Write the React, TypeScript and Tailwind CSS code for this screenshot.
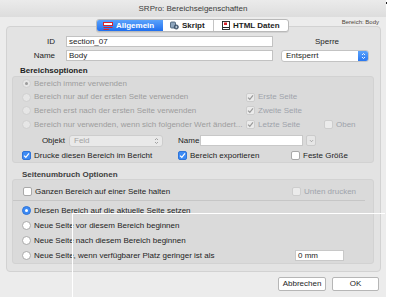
import React from 'react';

// small macOS-like form controls
const Check = ({ on, disabled }: { on?: boolean; disabled?: boolean }) => {
  const box =
    on && !disabled
      ? 'bg-[#3d8bf5] border-[#2f74d8]'
      : disabled
        ? 'bg-[#ebebeb] border-[#cdcdcd]'
        : 'bg-white border-[#a9a9a9]';
  return (
    <span className={`flex h-[9px] w-[9px] shrink-0 items-center justify-center rounded-[2px] border ${box}`}>
      {on && (
        <svg width="7" height="7" viewBox="0 0 7 7">
          <path d="M1 3.6 L2.8 5.3 L6 1.4" fill="none" stroke={disabled ? '#9a9a9a' : '#fff'} strokeWidth="1.2" />
        </svg>
      )}
    </span>
  );
};

const Radio = ({ on, disabled }: { on?: boolean; disabled?: boolean }) => {
  const cls =
    on && !disabled
      ? 'bg-[#3d8bf5] border-[#2f74d8]'
      : disabled
        ? 'bg-[#e6e6e6] border-[#d0d0d0]'
        : 'bg-white border-[#a9a9a9]';
  return (
    <span className={`flex h-[9px] w-[9px] shrink-0 items-center justify-center rounded-full border ${cls}`}>
      {on && <span className={`h-[3px] w-[3px] rounded-full ${disabled ? 'bg-[#9a9a9a]' : 'bg-white'}`} />}
    </span>
  );
};

const Chevrons = ({ color }: { color: string }) => (
  <svg width="5" height="8" viewBox="0 0 5 8">
    <path d="M1 3 L2.5 1.5 L4 3 M1 5 L2.5 6.5 L4 5" fill="none" stroke={color} strokeWidth="0.9" />
  </svg>
);

const RadioLine = ({ label, on, disabled }: { label: string; on?: boolean; disabled?: boolean }) => (
  <span className={`flex items-center gap-[3px] whitespace-nowrap ${disabled ? 'text-[#9d9d9d]' : ''}`}>
    <Radio on={on} disabled={disabled} />
    {label}
  </span>
);

const CheckLine = ({ label, on, disabled }: { label: string; on?: boolean; disabled?: boolean }) => (
  <span className={`flex items-center gap-[3px] whitespace-nowrap ${disabled ? 'text-[#9ea3ab]' : ''}`}>
    <Check on={on} disabled={disabled} />
    {label}
  </span>
);

export default function App() {
  return (
    <div className="relative h-[307px] w-[399px] overflow-hidden bg-white font-['Liberation_Sans',Arial,sans-serif] text-[8px] leading-[10px] text-[#1d1d1d]">
      <div className="flex h-[297px] w-[386px] flex-col bg-[#ececec]">
        {/* title bar */}
        <div className="flex h-[17px] shrink-0 items-center justify-center bg-gradient-to-b from-[#ebebeb] to-[#dddddd] text-[#3c3c3c]">
          SRPro: Bereichseigenschaften
        </div>

        {/* tabs */}
        <div className="relative z-10 mt-[2px] flex h-[13px] shrink-0">
          <div className="ml-[96px] flex h-[13px] overflow-hidden rounded-[3px] border border-[#b9b9b9] bg-white font-bold shadow-[0_1px_0_rgba(0,0,0,0.08)]">
            <div className="flex w-[66px] items-center gap-[3px] bg-gradient-to-b from-[#5aa2fb] to-[#1f6fef] pl-[6px] text-white">
              <svg width="10" height="8" viewBox="0 0 10 8">
                <rect x="0.5" y="0.5" width="9" height="3" fill="#fff" stroke="#d8232a" />
                <path d="M0.5 5.5 H9.5 M0.5 7.5 H6" stroke="#d8232a" strokeWidth="1" />
              </svg>
              Allgemein
            </div>
            <div className="flex w-[51px] items-center gap-[3px] border-r border-[#c4c4c4] pl-[7px]">
              <svg width="9" height="9" viewBox="0 0 9 9">
                <rect x="0.5" y="1" width="5" height="6" rx="1" fill="#8fa6bd" stroke="#3d556d" strokeWidth="0.8" />
                <circle cx="6.3" cy="6" r="2.1" fill="#5d7690" stroke="#2b3d50" strokeWidth="0.7" />
                <circle cx="6.3" cy="6" r="0.7" fill="#fff" />
              </svg>
              Skript
            </div>
            <div className="flex w-[74px] items-center gap-[3px] pl-[8px]">
              <svg width="8" height="9" viewBox="0 0 8 9">
                <rect x="0.5" y="0.5" width="7" height="8" fill="#fff" stroke="#222" strokeWidth="0.9" />
                <rect x="2" y="1.5" width="3" height="2.5" fill="#d8232a" />
                <path d="M1 6.5 H7" stroke="#222" strokeWidth="1.2" />
              </svg>
              HTML Daten
            </div>
          </div>
          <span className="ml-auto mr-[7px] text-[6px] leading-[7px] text-[#4d4438]">Bereich: Body</span>
        </div>

        {/* tab panel */}
        <div className="ml-[6px] mt-[-6px] h-[246px] w-[375px] shrink-0 rounded-[4px] border border-[#d2d2d2] bg-[#e3e3e3]">
          {/* ID / Name / Sperre */}
          <div className="flex pt-[9px]">
            <div className="flex flex-col gap-[3px]">
              <div className="flex h-[11px] items-center">
                <span className="w-[48px] text-right">ID</span>
                <span className="ml-[11px] flex h-[11px] w-[207px] items-center border border-[#c2c2c2] bg-white pl-[2px]">section_07</span>
              </div>
              <div className="flex h-[11px] items-center">
                <span className="w-[48px] text-right">Name</span>
                <span className="ml-[11px] flex h-[11px] w-[207px] items-center border border-[#c2c2c2] bg-white pl-[2px]">Body</span>
              </div>
            </div>
            <div className="ml-[8px] flex w-[88px] flex-col">
              <span className="flex h-[11px] items-center justify-center pl-[4px]">Sperre</span>
              <div className="mt-[3px] flex h-[12px] overflow-hidden rounded-[3px] border border-[#c3c3c3] bg-white">
                <span className="flex flex-1 items-center pl-[4px]">Entsperrt</span>
                <span className="flex w-[10px] items-center justify-center bg-gradient-to-b from-[#5aa2fb] to-[#2a78f0]">
                  <Chevrons color="#fff" />
                </span>
              </div>
            </div>
          </div>

          {/* Bereichsoptionen */}
          <div className="mt-[4px] h-[10px] pl-[13px] font-bold">Bereichsoptionen</div>
          <div className="ml-[5px] flex h-[87px] w-[362px] flex-col rounded-[3px] border border-[#d2d2d2] bg-[#dadada]">
            <div className="flex h-[13px] items-center pl-[9px]">
              <RadioLine label="Bereich immer verwenden" on disabled />
            </div>
            <div className="flex h-[14px] items-center pl-[9px]">
              <div className="w-[224px]">
                <RadioLine label="Bereich nur auf der ersten Seite verwenden" disabled />
              </div>
              <CheckLine label="Erste Seite" on disabled />
            </div>
            <div className="flex h-[13px] items-center pl-[9px]">
              <div className="w-[224px]">
                <RadioLine label="Bereich erst nach der ersten Seite verwenden" disabled />
              </div>
              <CheckLine label="Zweite Seite" on disabled />
            </div>
            <div className="flex h-[15px] items-center pl-[9px]">
              <div className="w-[224px]">
                <RadioLine label="Bereich nur verwenden, wenn sich folgender Wert ändert..." disabled />
              </div>
              <div className="w-[78px]">
                <CheckLine label="Letzte Seite" on disabled />
              </div>
              <CheckLine label="Oben" disabled />
            </div>
            <div className="flex h-[17px] items-center">
              <span className="w-[52px] text-right">Objekt</span>
              <span className="ml-[4px] flex h-[12px] w-[94px] items-center justify-between rounded-[3px] border border-[#cdcdcd] bg-[#e9e9e9] pl-[4px] pr-[3px] text-[#a3a3a3]">
                Feld
                <Chevrons color="#9a9a9a" />
              </span>
              <span className="ml-[15px] w-[21px]">Name</span>
              <span className="ml-[1px] h-[11px] w-[103px] border border-[#c8c8c8] bg-white" />
              <span className="ml-[3px] flex h-[11px] w-[10px] items-center justify-center rounded-[2px] border border-[#cbcbcb] bg-[#e6e6e6]">
                <svg width="5" height="4" viewBox="0 0 5 4">
                  <path d="M1 1.2 L2.5 2.7 L4 1.2" fill="none" stroke="#9a9a9a" strokeWidth="0.9" />
                </svg>
              </span>
            </div>
            <div className="flex h-[13px] items-center pl-[9px]">
              <div className="w-[156px]">
                <CheckLine label="Drucke diesen Bereich im Bericht" on />
              </div>
              <div className="w-[113px]">
                <CheckLine label="Bereich exportieren" on />
              </div>
              <CheckLine label="Feste Größe" />
            </div>
          </div>

          {/* Seitenumbruch Optionen */}
          <div className="mt-[7px] h-[9px] pl-[15px] font-bold leading-[9px] text-[#3e3e3e]">Seitenumbruch Optionen</div>
          <div className="ml-[5px] flex h-[85px] w-[362px] flex-col rounded-[3px] border border-[#d2d2d2] bg-[#dadada]">
            <div className="mr-[8px] flex h-[21px] items-center border-b border-[#c6c6c6] pl-[10px] pt-[3px]">
              <div className="w-[269px]">
                <CheckLine label="Ganzen Bereich auf einer Seite halten" />
              </div>
              <CheckLine label="Unten drucken" disabled />
            </div>
            <div className="flex flex-col pl-[9px] pt-[2px]">
              <div className="flex h-[15px] items-center">
                <RadioLine label="Diesen Bereich auf die aktuelle Seite setzen" on />
              </div>
              <div className="flex h-[15px] items-center">
                <RadioLine label="Neue Seite vor diesem Bereich beginnen" />
              </div>
              <div className="flex h-[15px] items-center">
                <RadioLine label="Neue Seite nach diesem Bereich beginnen" />
              </div>
              <div className="flex h-[15px] items-center">
                <div className="w-[273px]">
                  <RadioLine label="Neue Seite, wenn verfügbarer Platz geringer ist als" />
                </div>
                <span className="flex h-[11px] w-[49px] items-center border border-[#c8c8c8] bg-white pl-[2px]">0 mm</span>
              </div>
            </div>
          </div>
        </div>

        {/* buttons */}
        <div className="mt-[5px] flex justify-end gap-[6px] pr-[7px]">
          <button className="flex h-[14px] w-[48px] items-center justify-center rounded-[2px] border border-[#b6b6b6] bg-white">
            Abbrechen
          </button>
          <button className="flex h-[14px] w-[47px] items-center justify-center rounded-[2px] border border-[#b6b6b6] bg-white">
            OK
          </button>
        </div>
      </div>

      {/* guide lines lying over the dialog */}
      <div className="absolute left-[72px] top-[213px] h-[1px] w-[313px] bg-white" />
      <div className="absolute bottom-0 left-[72px] top-[213px] w-[1px] bg-white" />
      <div className="absolute left-[386px] top-[2px] h-[2px] w-[1px] bg-[#222]" />
    </div>
  );
}
